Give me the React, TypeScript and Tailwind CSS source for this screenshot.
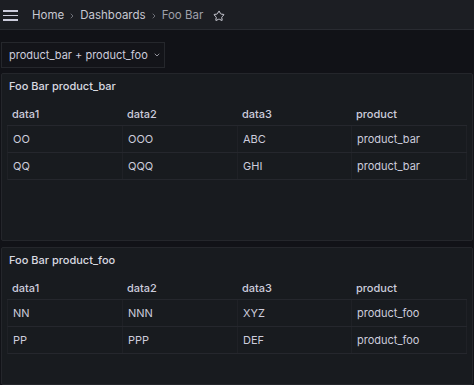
import { ChevronDown, ChevronRight, Star } from 'lucide-react';

type Row = string[];

const columns = ['data1', 'data2', 'data3', 'product'];

function DataTable({ rows }: { rows: Row[] }) {
  return (
    <div className="mx-[5px] text-[11px] text-[#ccccdc]">
      <div className="grid grid-cols-[115px_115px_114px_115px] h-[28px] pt-[6px] items-center border-b border-[#25272d]">
        {columns.map((c) => (
          <div key={c} className="pl-[5px] font-medium">
            {c}
          </div>
        ))}
      </div>
      {rows.map((row, i) => (
        <div
          key={i}
          className="grid grid-cols-[115px_115px_114px_115px] h-[27px] border-b border-[#25272d] border-l border-l-[#1f2126]"
        >
          {row.map((cell, j) => (
            <div key={j} className="pl-[5px] flex items-center border-r border-[#1f2126]">
              {cell}
            </div>
          ))}
        </div>
      ))}
    </div>
  );
}

function Panel({ title, rows, className }: { title: string; rows: Row[]; className: string }) {
  return (
    <div className={`mx-[1px] bg-[#181b1f] border border-[#24262b] rounded-[2px] ${className}`}>
      <div className="h-[24px] flex items-center px-[7px] text-[11px] font-medium text-[#d8d9e0]">
        {title}
      </div>
      <DataTable rows={rows} />
    </div>
  );
}

export default function App() {
  return (
    <div className="w-[474px] h-[385px] overflow-hidden bg-[#111217] font-['Inter',sans-serif] flex flex-col">
      <header className="h-[30px] shrink-0 bg-[#1c1e23] border-b border-[#292b31] flex items-center text-[11.5px] pt-[2px]">
        <div className="w-[15px] ml-[3px] flex flex-col gap-[3px]">
          <span className="h-[1.5px] bg-[#ccccdc]" />
          <span className="h-[1.5px] bg-[#ccccdc]" />
          <span className="h-[1.5px] bg-[#ccccdc]" />
        </div>
        <span className="ml-[14px] text-[#c7c8d2]">Home</span>
        <ChevronRight className="w-[8px] h-[8px] mx-[4px] text-[#7e7f88]" strokeWidth={2.5} />
        <span className="text-[#c7c8d2]">Dashboards</span>
        <ChevronRight className="w-[8px] h-[8px] mx-[4px] text-[#7e7f88]" strokeWidth={2.5} />
        <span className="text-[#9fa0aa]">Foo Bar</span>
        <Star className="ml-[10px] w-[12px] h-[12px] text-[#d0d1da]" strokeWidth={2} />
      </header>

      <div className="pt-[12px] pl-[1px]">
        <div className="w-[164px] h-[26px] border border-[#25272c] bg-[#131419] flex items-center pl-[7px] text-[11px] text-[#ccccdc] whitespace-nowrap">
          product_bar + product_foo
          <ChevronDown className="ml-[5px] w-[8px] h-[8px] text-[#aaabb4]" strokeWidth={2.5} />
        </div>
      </div>

      <Panel
        title="Foo Bar product_bar"
        className="mt-[5px] h-[168px] shrink-0"
        rows={[
          ['OO', 'OOO', 'ABC', 'product_bar'],
          ['QQ', 'QQQ', 'GHI', 'product_bar'],
        ]}
      />
      <Panel
        title="Foo Bar product_foo"
        className="mt-[6px] flex-1"
        rows={[
          ['NN', 'NNN', 'XYZ', 'product_foo'],
          ['PP', 'PPP', 'DEF', 'product_foo'],
        ]}
      />
    </div>
  );
}
